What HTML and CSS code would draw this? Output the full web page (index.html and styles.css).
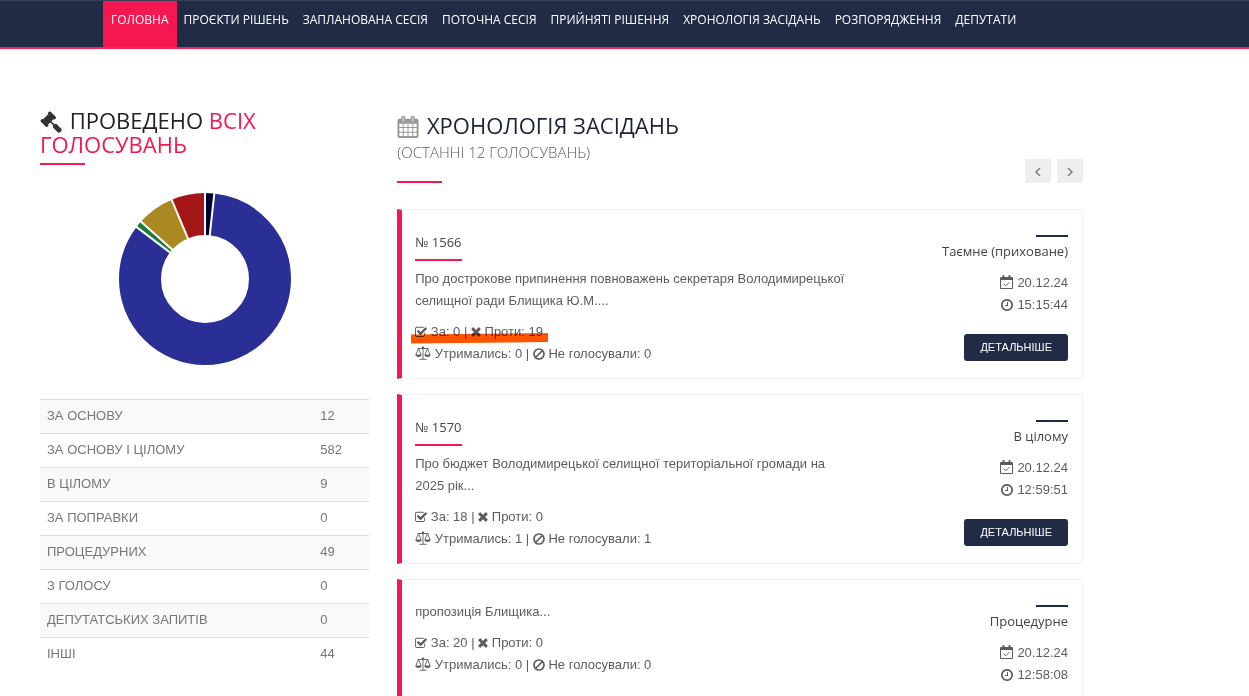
FILE: index.html
```html
<!DOCTYPE html>
<html lang="uk">
<head>
  <meta charset="UTF-8" />
  <meta name="viewport" content="width=device-width, initial-scale=1.0" />
  <title>Хронологія засідань</title>
  <link rel="stylesheet" href="styles.css">
</head>
<body>
  <!-- icon set -->
  <svg class="sprite" aria-hidden="true">
    <symbol id="i-gavel" viewBox="0 0 1792 1792"><path d="M1771 1536q0 53-37 90l-107 108q-39 37-91 37-53 0-90-37l-363-364q-38-36-38-90 0-53 43-96l-256-256-126 126q-14 14-34 14t-34-14q2 2 12.500 12t12.500 13 10 11.500 10 13.500 6 13.500 5.500 16.500 1.500 18q0 38-28 68-3 3-16.500 18t-19 20.500-18.500 16.500-22 15.500-22 9-26 4.500q-40 0-68-28l-408-408q-28-28-28-68 0-13 4.500-26t9-22 15.500-22 16.500-18.500 20.500-19 18-16.500q30-28 68-28 10 0 18 1.500t16.500 5.500 13.500 6 13.500 10 11.500 10 13 12.500 12 12.500q-14-14-14-34t14-34l348-348q14-14 34-14t34 14q-2-2-12.500-12t-12.500-13-10-11.500-10-13.500-6-13.500-5.500-16.500-1.500-18q0-38 28-68 3-3 16.500-18t19-20.500 18.500-16.500 22-15.500 22-9 26-4.500q40 0 68 28l408 408q28 28 28 68 0 13-4.500 26t-9 22-15.500 22-16.500 18.500-20.500 19-18 16.500q-30 28-68 28-10 0-18-1.500t-16.500-5.500-13.500-6-13.500-10-11.500-10-13-12.500-12-12.500q14 14 14 34t-14 34l-126 126 256 256q43-43 96-43 52 0 91 37l363 363q37 39 37 91z"/></symbol>
    <symbol id="i-calendar" viewBox="0 0 22 24"><path fill-rule="evenodd" d="M2 4h2V2.500a1.500 1.500 0 0 1 1.500-1.500h1A1.500 1.500 0 0 1 8 2.500V4h6V2.500A1.500 1.500 0 0 1 15.500 1h1A1.500 1.500 0 0 1 18 2.500V4h2a2 2 0 0 1 2 2v16a2 2 0 0 1-2 2H2a2 2 0 0 1-2-2V6a2 2 0 0 1 2-2zM5.500 2.500v4h1v-4zM15.500 2.500v4h1v-4zM2 9v3.500h3.500V9zM6.500 9v3.500h4V9zM11.500 9v3.500h4V9zM16.500 9v3.500H20V9zM2 13.500v4h3.500v-4zM6.500 13.500v4h4v-4zM11.500 13.500v4h4v-4zM16.500 13.500v4H20v-4zM2 18.500V22h3.500v-3.500zM6.500 18.500V22h4v-3.500zM11.500 18.500V22h4v-3.500zM16.500 18.500V22H20v-3.500z"/></symbol>
    <symbol id="i-check" viewBox="128 128 1664 1536"><path d="M1472 930v318q0 119-84.500 203.500t-203.500 84.500h-832q-119 0-203.500-84.500t-84.500-203.500v-832q0-119 84.500-203.500t203.500-84.500h832q63 0 117 25 15 7 18 23 3 17-9 29l-49 49q-10 10-23 10-3 0-9-2-23-6-45-6h-832q-66 0-113 47t-47 113v832q0 66 47 113t113 47h832q66 0 113-47t47-113v-254q0-13 9-22l64-64q10-10 23-10 6 0 12 3 20 8 20 29zm231-489l-814 814q-24 24-57 24t-57-24l-430-430q-24-24-24-57t24-57l110-110q24-24 57-24t57 24l263 263 647-647q24-24 57-24t57 24l110 110q24 24 24 57t-24 57z" transform="translate(64 40)"/></symbol>
    <symbol id="i-times" viewBox="256 256 1280 1408"><path d="M1490 1322q0 40-28 68l-136 136q-28 28-68 28t-68-28l-294-294-294 294q-28 28-68 28t-68-28l-136-136q-28-28-28-68t28-68l294-294-294-294q-28-28-28-68t28-68l136-136q28-28 68-28t68 28l294 294 294-294q28-28 68-28t68 28l136 136q28 28 28 68t-28 68l-294 294 294 294q28 28 28 68z"/></symbol>
    <symbol id="i-balance" viewBox="0 0 16 14"><g fill="none" stroke="currentColor" stroke-width="0.900"><path d="M8 1v12M4.500 13.300h7M2.500 2.500h11M3.500 2.500L.8 9h5.400zM12.500 2.500L9.800 9h5.400z"/></g><path d="M.4 9h6.200q-.4 2-3.100 2T.4 9zM9.400 9h6.200q-.4 2-3.100 2T9.400 9z"/><circle cx="8" cy="1.800" r="1.300"/></symbol>
    <symbol id="i-ban" viewBox="0 0 12 12"><g fill="none" stroke="currentColor" stroke-width="1.700"><circle cx="6" cy="6" r="5"/><path d="M9.500 2.500l-7 7"/></g></symbol>
    <symbol id="i-date" viewBox="0 0 13 14"><path fill-rule="evenodd" d="M1 2h1.500V.8Q2.500 0 3.500 0t1 .8V2h4V.8q0-.8 1-.8t1 .8V2H12a1 1 0 0 1 1 1v10a1 1 0 0 1-1 1H1a1 1 0 0 1-1-1V3a1 1 0 0 1 1-1zM1 5v8h11V5z"/><path d="M3.800 8.800l2 2 3.600-3.600" fill="none" stroke="currentColor"/></symbol>
    <symbol id="i-clock" viewBox="128 128 1536 1536"><path d="M1024 544v448q0 14-9 23t-23 9h-320q-14 0-23-9t-9-23v-64q0-14 9-23t23-9h224v-352q0-14 9-23t23-9h64q14 0 23 9t9 23zm416 352q0-148-73-273t-198-198-273-73-273 73-198 198-73 273 73 273 198 198 273 73 273-73 198-198 73-273zm224 0q0 209-103 385.500t-279.500 279.500-385.500 103-385.500-103-279.500-279.500-103-385.500 103-385.500 279.500-279.500 385.500-103 385.500 103 279.500 279.500 103 385.500z"/></symbol>
  </svg>

  <nav class="navbar">
    <a class="active" href="#">ГОЛОВНА</a>
    <a href="#">ПРОЄКТИ РІШЕНЬ</a>
    <a href="#">ЗАПЛАНОВАНА СЕСІЯ</a>
    <a href="#">ПОТОЧНА СЕСІЯ</a>
    <a href="#">ПРИЙНЯТІ РІШЕННЯ</a>
    <a href="#">ХРОНОЛОГІЯ ЗАСІДАНЬ</a>
    <a href="#">РОЗПОРЯДЖЕННЯ</a>
    <a href="#">ДЕПУТАТИ</a>
  </nav>

  <main class="container">
    <section class="stats">
      <h2><svg class="icon-gavel"><use href="#i-gavel"/></svg> ПРОВЕДЕНО <span>ВСІХ ГОЛОСУВАНЬ</span></h2>
      <div class="line"></div>

      <!-- pathLength is the total number of votes -->
      <svg class="chart" viewBox="-87 -87 174 174" role="img" aria-label="Голосування">
        <g transform="rotate(-90)" fill="none" stroke-width="42">
          <circle r="65" pathLength="696" stroke="#292f94" stroke-dasharray="582 696" stroke-dashoffset="-12"/>
          <circle r="65" pathLength="696" stroke="#000033" stroke-dasharray="12 696"/>
          <circle r="65" pathLength="696" stroke="#1f7a3d" stroke-dasharray="9 696" stroke-dashoffset="-594"/>
          <circle r="65" pathLength="696" stroke="#aa8822" stroke-dasharray="49 696" stroke-dashoffset="-603"/>
          <circle r="65" pathLength="696" stroke="#a31717" stroke-dasharray="44 696" stroke-dashoffset="-652"/>
        </g>
        <g stroke="#fff" stroke-width="2">
          <path d="M0-42V-87"/>
          <path d="M0-42V-87" transform="rotate(6.200)"/>
          <path d="M0-42V-87" transform="rotate(307.200)"/>
          <path d="M0-42V-87" transform="rotate(311.900)"/>
          <path d="M0-42V-87" transform="rotate(337.200)"/>
        </g>
      </svg>

      <table>
        <tr><td>ЗА ОСНОВУ</td><td>12</td></tr>
        <tr><td>ЗА ОСНОВУ І ЦІЛОМУ</td><td>582</td></tr>
        <tr><td>В ЦІЛОМУ</td><td>9</td></tr>
        <tr><td>ЗА ПОПРАВКИ</td><td>0</td></tr>
        <tr><td>ПРОЦЕДУРНИХ</td><td>49</td></tr>
        <tr><td>З ГОЛОСУ</td><td>0</td></tr>
        <tr><td>ДЕПУТАТСЬКИХ ЗАПИТІВ</td><td>0</td></tr>
        <tr><td>ІНШІ</td><td>44</td></tr>
      </table>
    </section>

    <section class="history">
      <header>
        <div>
          <h2><svg class="icon-calendar"><use href="#i-calendar"/></svg> ХРОНОЛОГІЯ ЗАСІДАНЬ</h2>
          <p class="sub">(ОСТАННІ 12 ГОЛОСУВАНЬ)</p>
          <div class="line"></div>
        </div>
        <div class="pager">
          <button type="button" aria-label="Назад"><svg viewBox="0 0 6 8"><path d="M5 0L1 4l4 4"/></svg></button>
          <button type="button" aria-label="Вперед"><svg viewBox="0 0 6 8"><path d="M1 0l4 4-4 4"/></svg></button>
        </div>
      </header>

      <article class="card">
        <div class="info">
          <h3>№ 1566</h3>
          <p>Про дострокове припинення повноважень секретаря Володимирецької селищної ради Блищика Ю.М....</p>
          <div class="votes">
            <div class="marked"><svg class="i-check"><use href="#i-check"/></svg> За: 0 | <svg class="i-times"><use href="#i-times"/></svg> Проти: 19
              <svg class="marker" viewBox="0 0 137 11" preserveAspectRatio="none"><path d="M0 1.500L137 0v9L0 10.500z"/></svg>
            </div>
            <div><svg class="i-balance"><use href="#i-balance"/></svg> Утримались: 0 | <svg class="i-ban"><use href="#i-ban"/></svg> Не голосували: 0</div>
          </div>
        </div>
        <div class="meta">
          <h4>Таємне (приховане)</h4>
          <div><svg class="i-date"><use href="#i-date"/></svg> 20.12.24</div>
          <div><svg class="i-clock"><use href="#i-clock"/></svg> 15:15:44</div>
          <a class="btn" href="#">ДЕТАЛЬНІШЕ</a>
        </div>
      </article>

      <article class="card">
        <div class="info">
          <h3>№ 1570</h3>
          <p>Про бюджет Володимирецької селищної територіальної громади на 2025 рік...</p>
          <div class="votes">
            <div><svg class="i-check"><use href="#i-check"/></svg> За: 18 | <svg class="i-times"><use href="#i-times"/></svg> Проти: 0</div>
            <div><svg class="i-balance"><use href="#i-balance"/></svg> Утримались: 1 | <svg class="i-ban"><use href="#i-ban"/></svg> Не голосували: 1</div>
          </div>
        </div>
        <div class="meta">
          <h4>В цілому</h4>
          <div><svg class="i-date"><use href="#i-date"/></svg> 20.12.24</div>
          <div><svg class="i-clock"><use href="#i-clock"/></svg> 12:59:51</div>
          <a class="btn" href="#">ДЕТАЛЬНІШЕ</a>
        </div>
      </article>

      <article class="card">
        <div class="info">
          <p>пропозиція Блищика...</p>
          <div class="votes">
            <div><svg class="i-check"><use href="#i-check"/></svg> За: 20 | <svg class="i-times"><use href="#i-times"/></svg> Проти: 0</div>
            <div><svg class="i-balance"><use href="#i-balance"/></svg> Утримались: 0 | <svg class="i-ban"><use href="#i-ban"/></svg> Не голосували: 0</div>
          </div>
        </div>
        <div class="meta">
          <h4>Процедурне</h4>
          <div><svg class="i-date"><use href="#i-date"/></svg> 20.12.24</div>
          <div><svg class="i-clock"><use href="#i-clock"/></svg> 12:58:08</div>
          <a class="btn" href="#">ДЕТАЛЬНІШЕ</a>
        </div>
      </article>
    </section>
  </main>
</body>
</html>
```

FILE: styles.css
```css
* {
  box-sizing: border-box;
}
body {
  margin: 0;
  font-family: "Liberation Sans", Arial, sans-serif;
  font-size: 13px;
  line-height: 22px;
  color: #5c5c5c;
  background: #fff;
}
h2, h3, h4, p {
  margin: 0;
}
svg {
  fill: currentColor;
}
.sprite {
  display: none;
}

/* navigation */
.navbar {
  display: flex;
  height: 49px;
  padding-left: 103px;
  background: #212b45;
  border-top: 1px solid #343f56;
  border-bottom: 2px solid #f6265a;
}
.navbar a {
  padding: 8px 7px 0;
  font-family: "Open Sans", sans-serif;
  font-size: 12px;
  font-weight: 500;
  color: #fff;
  text-decoration: none;
  white-space: nowrap;
}
.navbar .active {
  padding-left: 8px;
  padding-right: 8px;
  background: #f5174f;
}

.container {
  display: grid;
  grid-template-columns: 12fr 25fr;
  gap: 28px;
  padding: 60px 166px 40px 40px;
}
h2 {
  font-family: "Open Sans", sans-serif;
  font-size: 22px;
  font-weight: 400;
  line-height: 23px;
  color: #222;
}
h2 span {
  color: #f5174f;
}
h2 svg {
  margin-right: 2px;
  vertical-align: -4px;
}
.line {
  width: 45px;
  height: 2px;
  background: #f5174f;
}

/* votes summary */
.icon-gavel {
  width: 22px;
  height: 22px;
  color: #333;
}
.stats .line {
  margin-top: 7px;
}
.chart {
  display: block;
  width: 174px;
  margin: 27px auto 33px;
}
table {
  width: 100%;
  border-collapse: collapse;
  color: #777;
}
td {
  height: 34px;
  padding: 0 7px 2px;
  border-top: 1px solid #ddd;
}
td:last-child {
  width: 56px;
}
tr:nth-child(odd) {
  background: #f9f9f9;
}

/* sessions list */
.history header {
  display: flex;
  justify-content: space-between;
  align-items: flex-end;
  padding: 5px 0 26px;
}
.history h2 {
  color: #1b2238;
}
.icon-calendar {
  width: 22px;
  height: 23px;
  color: #999;
}
.sub {
  margin: 3px 0 18px;
  font-family: "Open Sans", sans-serif;
  font-size: 15px;
  font-weight: 300;
}
.pager {
  display: flex;
  gap: 6px;
}
.pager button {
  width: 26px;
  height: 24px;
  padding: 0;
  border: none;
  background: #eee;
}
.pager svg {
  width: 6px;
  height: 8px;
  fill: none;
  stroke: #777;
  stroke-width: 1.4;
}

.card {
  display: flex;
  justify-content: space-between;
  min-height: 170px;
  margin-bottom: 15px;
  padding: 21px 14px 13px 13px;
  border: 1px solid #f2f2f2;
  border-left: 5px solid #f5174f;
}
.info {
  width: 430px;
}
.card h3 {
  display: inline-block;
  height: 30px;
  margin-bottom: 7px;
  border-bottom: 2px solid #f5174f;
  font-family: "Open Sans", sans-serif;
  font-size: 13px;
  font-weight: 400;
  line-height: 22px;
  color: #444;
}
.votes {
  margin-top: 9px;
}
.votes svg, .meta svg {
  height: 12px;
  vertical-align: -2px;
}
.meta svg {
  margin-right: 1px;
}
.votes .i-check { width: 12px; }
.votes .i-times { width: 10px; }
.votes .i-balance { width: 16px; height: 14px; }
.votes .i-ban { width: 12px; }
.meta .i-date { width: 13px; height: 14px; }
.meta .i-clock { width: 12px; }

/* highlighter over the vote result */
.marked {
  position: relative;
}
.votes .marker {
  position: absolute;
  left: -4px;
  top: 12px;
  width: 137px;
  height: 11px;
  color: #ff5500;
  mix-blend-mode: multiply;
}

.meta {
  display: flex;
  flex-direction: column;
  align-items: flex-end;
  padding-top: 4px;
}
.meta h4 {
  margin-bottom: 10px;
  font-family: "Open Sans", sans-serif;
  font-size: 13px;
  font-weight: 400;
  color: #444;
}
.meta h4::before {
  content: "";
  display: block;
  width: 32px;
  height: 2px;
  margin: 0 0 3px auto;
  background: #212b45;
}
.btn {
  margin-top: 18px;
  padding: 0 16px;
  border-radius: 3px;
  background: #212b45;
  font-size: 11px;
  line-height: 27px;
  color: #fff;
  text-decoration: none;
}
```
